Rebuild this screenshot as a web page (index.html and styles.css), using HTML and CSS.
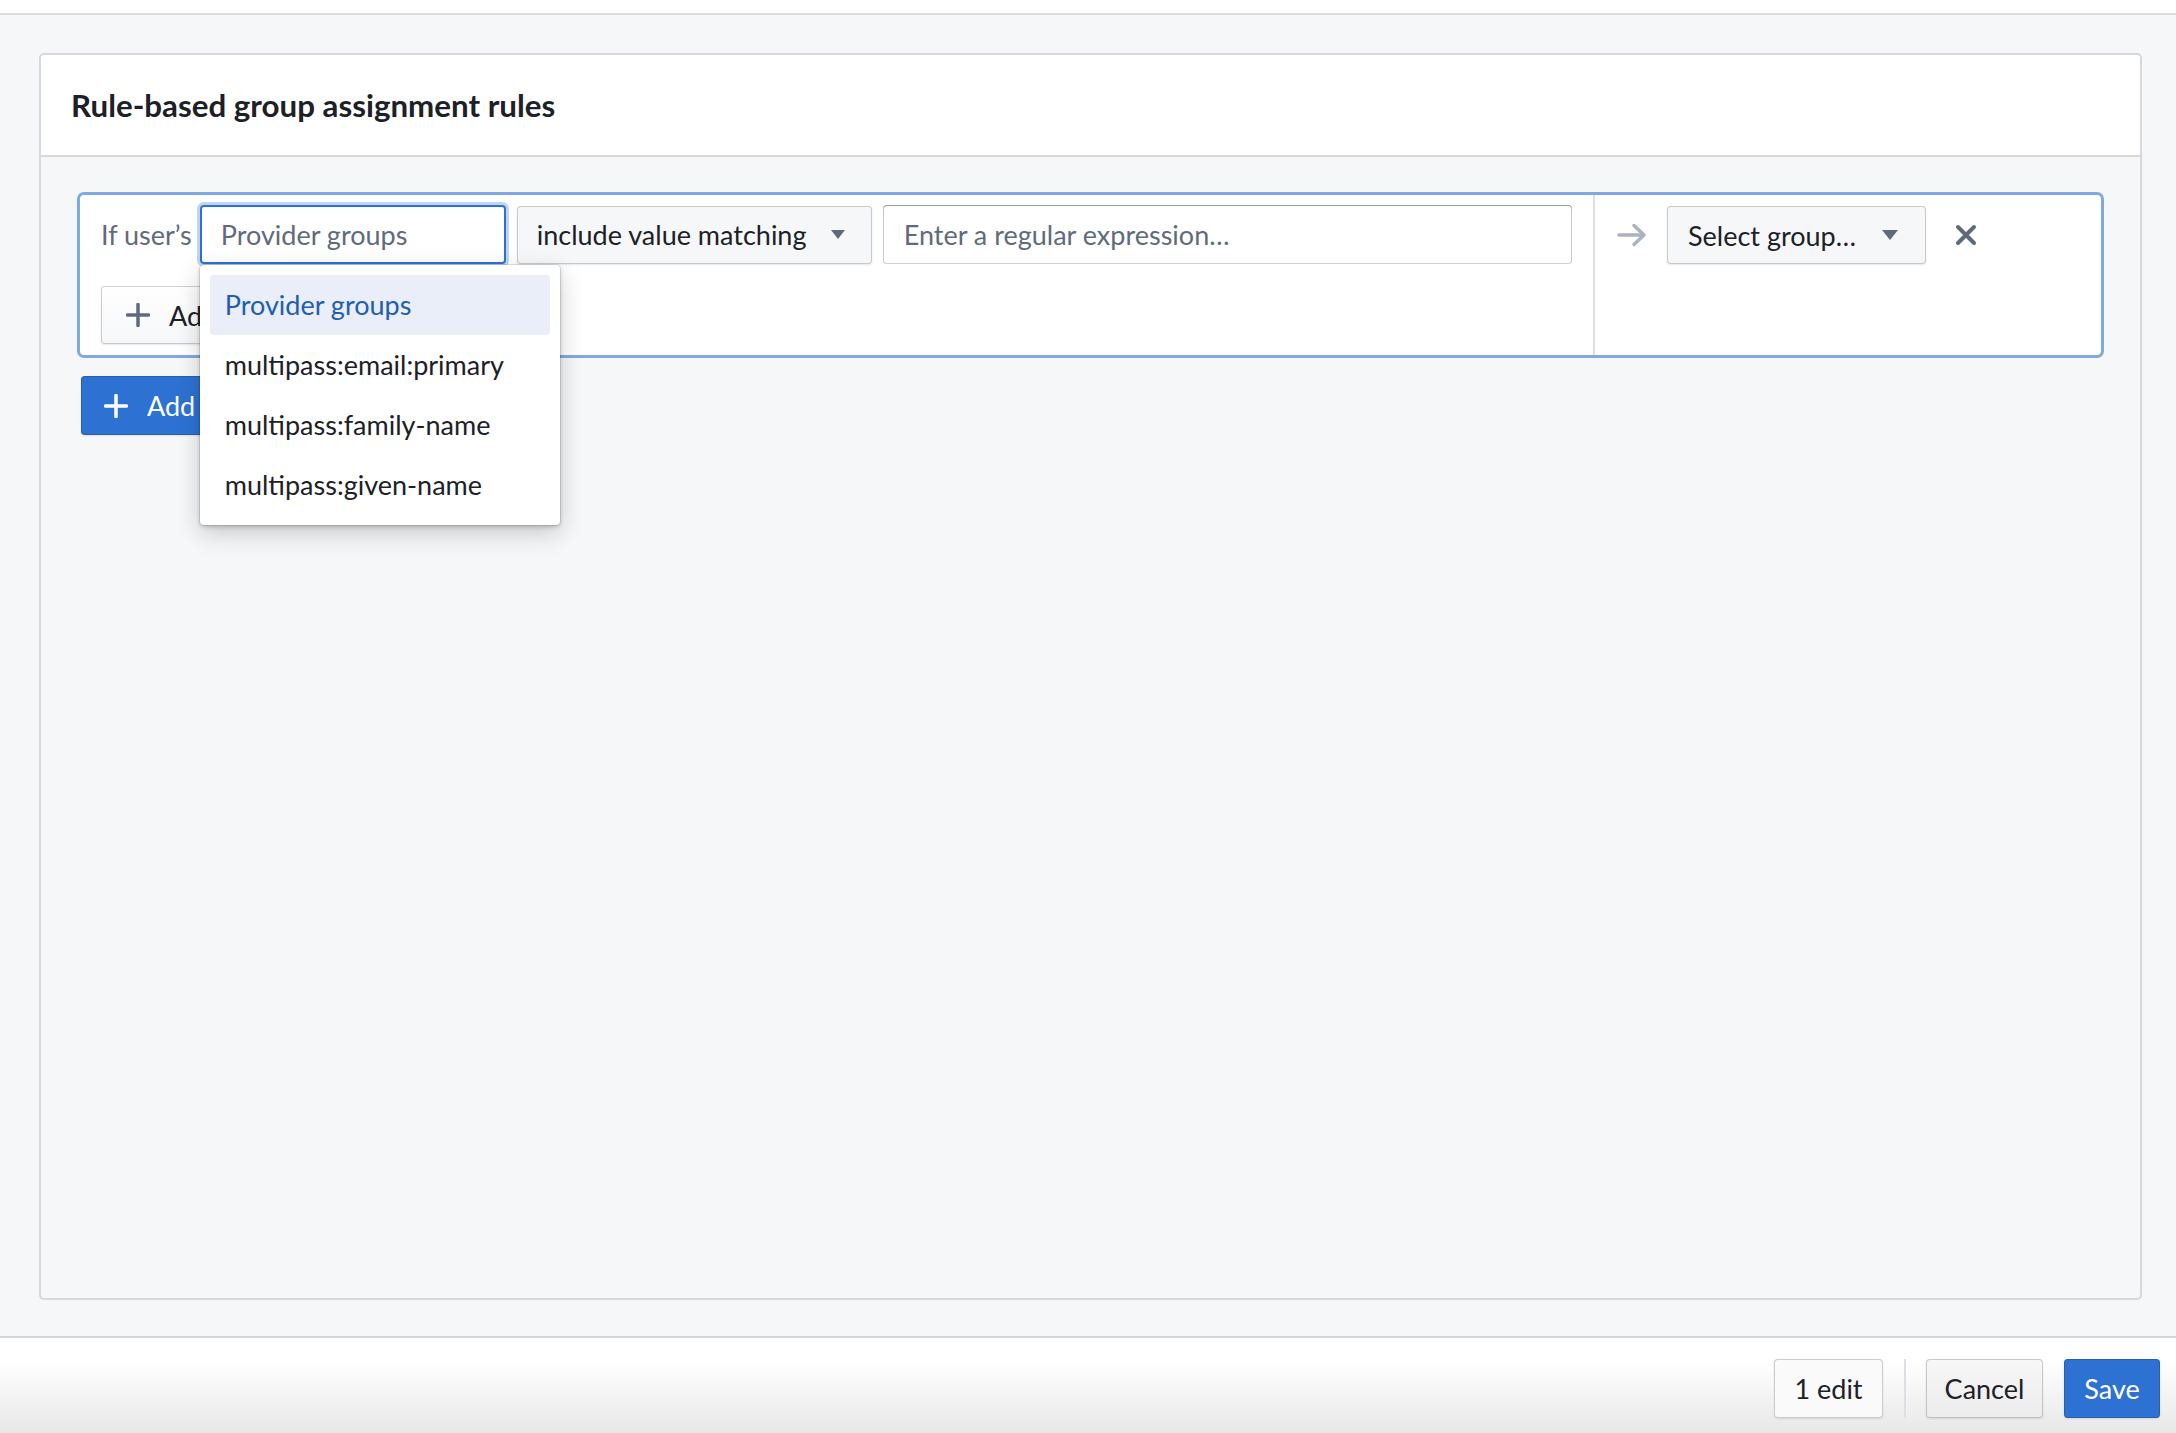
FILE: index.html
```html
<!DOCTYPE html>
<html lang="en">
<head>
<meta charset="utf-8">
<title>Rule-based group assignment rules</title>
<link rel="stylesheet" href="styles.css">
</head>
<body>
<div class="app">
  <div class="topbar"></div>
  <main class="main">
    <section class="card">
      <header class="card-header">
        <h2 class="card-title">Rule-based group assignment rules</h2>
      </header>
      <div class="card-body">
        <div class="rule">
          <div class="rule-conditions">
            <div class="cond-row">
              <span class="cond-label">If user’s</span>
              <div class="attr-field">
                <div class="input input-focused"><span class="placeholder">Provider groups</span></div>
                <ul class="menu">
                  <li class="menu-item active">Provider groups</li>
                  <li class="menu-item">multipass:email:primary</li>
                  <li class="menu-item">multipass:family-name</li>
                  <li class="menu-item">multipass:given-name</li>
                </ul>
              </div>
              <div class="btn select select-op">
                <span>include value matching</span>
                <svg class="caret" width="14" height="9" viewBox="0 0 14 9"><path d="M0 0h14L7 9z"/></svg>
              </div>
              <div class="input input-regex"><span class="placeholder">Enter a regular expression…</span></div>
            </div>
            <div class="cond-actions">
              <div class="btn btn-add-cond">
                <svg class="plus" width="24" height="24" viewBox="0 0 24 24"><path d="M12 1.5v21M1.5 12h21"/></svg>
                <span>Add</span>
              </div>
            </div>
          </div>
          <div class="rule-target">
            <svg class="arrow" width="30" height="26" viewBox="0 0 30 26"><path d="M2 13h25M17 3.5l10 9.5-10 9.5"/></svg>
            <div class="btn select select-group">
              <span>Select group…</span>
              <svg class="caret" width="16" height="10" viewBox="0 0 16 10"><path d="M0 0h16L8 10z"/></svg>
            </div>
            <svg class="close" width="22" height="22" viewBox="0 0 22 22"><path d="M3 3l16 16M19 3L3 19"/></svg>
          </div>
        </div>
        <div class="btn btn-primary btn-add-rule">
          <svg class="plus" width="24" height="24" viewBox="0 0 24 24"><path d="M12 1.5v21M1.5 12h21"/></svg>
          <span>Add</span>
        </div>
      </div>
    </section>
  </main>
  <footer class="footer">
    <div class="btn btn-plain">1 edit</div>
    <div class="footer-divider"></div>
    <div class="btn btn-cancel">Cancel</div>
    <div class="btn btn-primary btn-save">Save</div>
  </footer>
</div>
</body>
</html>
```
FILE: styles.css
```css
* { box-sizing: border-box; }
html, body { margin: 0; padding: 0; }
body {
  font-family: Lato, "Noto Sans", sans-serif;
  font-size: 27px;
  color: #1c2127;
  background: #f6f7f9;
}
.app {
  height: 100vh;
  display: flex;
  flex-direction: column;
}
.topbar {
  height: 15px;
  background: #fff;
  border-bottom: 2px solid #dcdde0;
  flex: none;
}
.main {
  flex: 1;
  display: flex;
  padding: 38px 34px 36px 39px;
  background: #f6f7f9;
  min-height: 0;
}
.card {
  flex: 1;
  display: flex;
  flex-direction: column;
  border: 2px solid #d6d8dc;
  border-radius: 5px;
  background: #f6f7f9;
}
.card-header {
  height: 102px;
  background: #fff;
  border-bottom: 2px solid #d6d8dc;
  border-radius: 4px 4px 0 0;
  display: flex;
  align-items: center;
  padding-left: 30px;
}
.card-title {
  margin: 0;
  font-size: 31.3px;
  font-weight: 700;
  color: #1c2127;
}
.card-body {
  flex: 1;
  padding: 35px 36px;
}
.rule {
  display: flex;
  height: 166px;
  border: 3px solid #80a8e2;
  border-radius: 7px;
  background: #fff;
}
.rule-conditions {
  flex: 1;
  padding: 10px 21px 11px 21px;
  border-right: 2px solid #dcdfe3;
}
.cond-row {
  display: flex;
  align-items: center;
  height: 59px;
}
.cond-label {
  color: #5f6b7c;
  margin-right: 8px;
  white-space: nowrap;
}
.attr-field {
  position: relative;
  width: 306px;
  height: 59px;
  flex: none;
}
.input {
  height: 59px;
  background: #fff;
  border-radius: 4px;
  box-shadow: inset 0 0 0 1px rgba(17,20,24,.2), inset 0 1px 1px rgba(17,20,24,.3);
  display: flex;
  align-items: center;
  padding-left: 21px;
  white-space: nowrap;
}
.input-focused {
  box-shadow: inset 0 0 0 2px #2d72d2, 0 0 0 3px rgba(45,114,210,.3), inset 0 1px 2px rgba(17,20,24,.15);
}
.input-regex {
  flex: 1;
  margin-left: 11px;
}
.placeholder { color: #5f6b7c; }
.btn {
  display: flex;
  align-items: center;
  height: 58px;
  padding: 0 21px;
  border-radius: 4px;
  background: #f6f7f9;
  box-shadow: inset 0 0 0 1px rgba(17,20,24,.2), 0 1px 2px rgba(17,20,24,.1);
  color: #1c2127;
  white-space: nowrap;
  flex: none;
}
.select {
  justify-content: space-between;
}
.select .caret { fill: #5f6b7c; flex: none; }
.select-op {
  width: 355px;
  margin-left: 11px;
  padding: 0 27px 0 20px;
}
.select-group {
  width: 259px;
  padding: 0 28px 0 21px;
}
.cond-actions {
  margin-top: 22px;
  display: flex;
}
.btn-add-cond {
  padding-left: 25px;
  gap: 19px;
  background: linear-gradient(#fff, #f6f7f9);
}
.plus {
  fill: none;
  stroke: #5f6b7c;
  stroke-width: 3.5;
  stroke-linecap: round;
  flex: none;
}
.btn-primary {
  background: #2d72d2;
  color: #fff;
  box-shadow: inset 0 0 0 1px rgba(17,20,24,.2), 0 1px 2px rgba(17,20,24,.1);
}
.btn-primary .plus { stroke: #fff; }
.btn-add-rule {
  display: inline-flex;
  margin: 18px 0 0 4px;
  height: 59px;
  padding-left: 23px;
  gap: 19px;
}
.rule-target {
  width: 506px;
  flex: none;
  padding: 11px 22px;
  display: flex;
  align-items: flex-start;
}
.arrow {
  fill: none;
  stroke: #abb3bf;
  stroke-width: 3.5;
  stroke-linecap: round;
  stroke-linejoin: round;
  margin-top: 16px;
  margin-right: 20px;
  flex: none;
}
.close {
  fill: none;
  stroke: #5f6b7c;
  stroke-width: 4;
  stroke-linecap: round;
  margin: 18px 0 0 29px;
  flex: none;
}
.menu {
  position: absolute;
  top: 60px;
  left: 0;
  width: 360px;
  margin: 0;
  padding: 10px;
  list-style: none;
  background: #fff;
  border-radius: 4px;
  box-shadow: 0 0 0 1px rgba(17,20,24,.1), 0 2px 4px rgba(17,20,24,.2), 0 8px 24px rgba(17,20,24,.2);
  z-index: 10;
}
.menu-item {
  height: 60px;
  line-height: 60px;
  padding: 0 15px;
  border-radius: 4px;
  white-space: nowrap;
  color: #1c2127;
}
.menu-item.active {
  background: #e9eef8;
  color: #215db0;
}
.footer {
  height: 97px;
  flex: none;
  border-top: 2px solid #d4d6da;
  background: linear-gradient(#fff 25%, #e7e7e7 100%);
  display: flex;
  justify-content: flex-end;
  align-items: flex-start;
  padding: 21px 16px 0 0;
}
.footer .btn { height: 59px; }
.btn-plain {
  width: 109px;
  justify-content: center;
  padding: 0;
  background: #fafafa;
}
.footer-divider {
  width: 2px;
  height: 59px;
  background: #dcdfe3;
  margin: 0 20px 0 21px;
}
.btn-cancel {
  width: 117px;
  justify-content: center;
  padding: 0;
  background: linear-gradient(#f7f7f7, #ececec);
}
.btn-save {
  width: 96px;
  justify-content: center;
  padding: 0;
  margin-left: 21px;
}
```
